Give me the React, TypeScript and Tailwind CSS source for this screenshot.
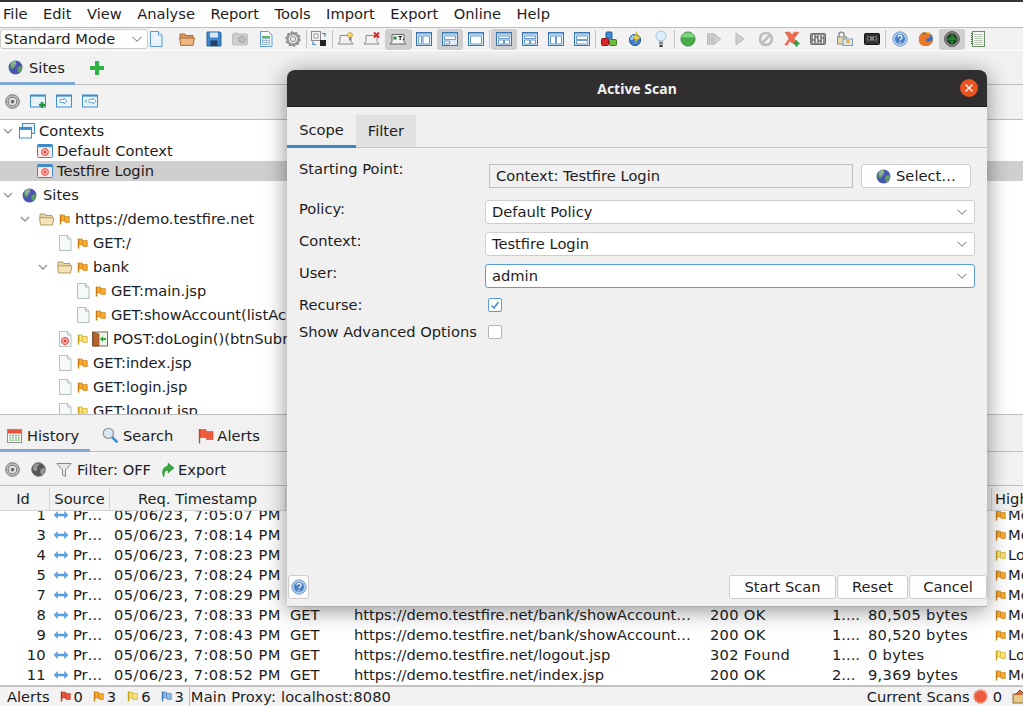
import React from "react";

const Svg = ({ children, className = "w-4 h-4" }: { children: React.ReactNode; className?: string }) => (
  <svg viewBox="0 0 16 16" className={"shrink-0 " + className}>{children}</svg>
);

const Flag = ({ c = "#f8a92c", d = "#c47a14" }: { c?: string; d?: string }) => (
  <svg viewBox="0 0 11 11" className="w-[11px] h-[11px] shrink-0">
    <path d="M1.500 .5v10" stroke={d} strokeWidth="1.400" />
    <path d="M2.200 1h3.300v1.500h4.800v6H6V7H2.200z" fill={c} stroke={d} strokeWidth=".6" />
    <path d="M5.500 2.500V7" stroke={d} strokeWidth=".6" />
  </svg>
);
const OF = () => <Flag />;
const YF = () => <Flag c="#f9e27a" d="#c4a11a" />;
const RF = () => <Flag c="#f0553e" d="#b8301c" />;
const BF = () => <Flag c="#8dbcea" d="#3f78b4" />;

const Page = ({ target = false }: { target?: boolean }) => (
  <Svg>
    <path d="M2.500 .5h8l3.500 3.500v11.500h-11.500z" fill="#f6f9fa" stroke="#b4bebe" />
    <path d="M10.500 .5v3.500h3.500" fill="#dfe6e6" stroke="#b4bebe" />
    {target && <><circle cx="8" cy="10" r="3.600" fill="#f5a7a0" stroke="#e0584c" /><circle cx="8" cy="10" r="1.300" fill="#e0443a" /></>}
  </Svg>
);
const Folder = () => (
  <Svg className="w-[16px] h-[16px]">
    <path d="M1 3h5l1 1.500h6v3H1z" fill="#e9d6a8" stroke="#b39a63" />
    <path d="M.6 6.800h14.200l-1.300 7.200H1.500z" fill="#f6e5bb" stroke="#b39a63" />
  </Svg>
);
const Globe = () => (
  <Svg className="w-[15px] h-[15px]">
    <circle cx="8" cy="8" r="7.400" fill="#4a55b0" />
    <path d="M3 3.500c2-2.500 5-3 6-2.500L8 4 6 5l1 2-2 3-3-2zM10 8l4-2 1 3-3 5-2-2z" fill="#5fa05a" />
    <circle cx="6" cy="4" r="3" fill="#fff" opacity=".28" />
  </Svg>
);
const Target = ({ dark = "#6f6f6f" }: { dark?: string }) => (
  <Svg className="w-[15px] h-[15px]">
    <circle cx="8" cy="8" r="7.300" fill="#bdbdbd" stroke={dark} />
    <circle cx="8" cy="8" r="4.600" fill="#e4e4e4" stroke={dark} />
    <circle cx="8" cy="8" r="2" fill={dark} />
  </Svg>
);
const CtxTarget = () => (
  <Svg>
    <rect x=".5" y="1.500" width="15" height="13" rx="1" fill="#fbe9e7" stroke="#3f8ccb" />
    <rect x=".5" y="1.500" width="15" height="2.600" fill="#3f8ccb" />
    <circle cx="8" cy="9" r="3.400" fill="#f6b0a8" stroke="#e0584c" />
    <circle cx="8" cy="9" r="1.200" fill="#e0443a" />
  </Svg>
);
const Win = ({ children }: { children?: React.ReactNode }) => (
  <Svg className="w-[16px] h-[16px]">
    <rect x=".5" y="2" width="15" height="12" fill="#eaf3fb" stroke="#3f8ccb" />
    <rect x=".5" y="2" width="15" height="1.600" fill="#3f8ccb" />
    {children}
  </Svg>
);
const Layout = ({ children }: { children?: React.ReactNode }) => (
  <svg viewBox="0 0 16 14" className="w-[16px] h-[14px] shrink-0">
    <rect x=".5" y=".5" width="15" height="13" fill="#dcebf8" stroke="#3a75ad" />
    <rect x="1" y="1" width="14" height="1.600" fill="#8fb7db" />
    {children}
  </svg>
);
const B = ({ d }: { d: string }) => <path d={d} fill="#fff" stroke="#4a87bf" strokeWidth=".8" />;

const Note = ({ x = false }: { x?: boolean }) => (
  <svg viewBox="0 0 18 14" className="w-[18px] h-[14px] shrink-0">
    <path d="M3 3.500h11v6l2 2.500H1l2-2.500z" fill="#f3f3f3" stroke="#8a8a8a" />
    {x ? <path d="M11 .5l5 5M16 .5l-5 5" stroke="#d8282a" strokeWidth="2" /> : <><circle cx="13" cy="3" r="2.600" fill="#f3d36a" stroke="#a98a2a" strokeWidth=".5" /><path d="M13 5.500v3" stroke="#444" strokeWidth="1.200" /></>}
  </svg>
);

const HelpIcon = () => (
  <Svg><circle cx="8" cy="8" r="7.200" fill="#a9c8ec" stroke="#7ea3d1" /><circle cx="8" cy="8" r="5" fill="#4a7fc4" /><path d="M6 6.300a2 2 0 1 1 3 1.700c-.7.400-1 .8-1 1.500M8 11v1.200" fill="none" stroke="#fff" strokeWidth="1.300" /></Svg>
);

const tools: (React.ReactNode | "sep")[] = [
  <Svg key="a"><path d="M2.500 .5h8l3.500 3.500v11.500h-11.500z" fill="#eaf3fb" stroke="#5a9ad6" /><path d="M10.500 .5v3.500h3.500" fill="#fff" stroke="#5a9ad6" /></Svg>,
  <Svg key="b"><path d="M1 3h5l1 1.500h7v4H1z" fill="#d99a5f" stroke="#a56c33" /><path d="M.6 7h14.800l-1.400 7.400H1.800z" fill="#edb680" stroke="#a56c33" /></Svg>,
  <Svg key="c"><path d="M1 1h13l1 1v13H1z" fill="#3f87cf" stroke="#2c6297" /><rect x="4" y="1.500" width="8" height="5" fill="#d9e8f6" /><rect x="4.500" y="9.500" width="7" height="5.500" fill="#24415f" /></Svg>,
  <svg key="d" viewBox="0 0 16 14" className="w-4 h-[14px] shrink-0"><rect x=".5" y="2" width="15" height="11" rx="1" fill="#cfcfcf" stroke="#bdbdbd" /><rect x="1.500" y=".5" width="4" height="2" fill="#c4c4c4" /><circle cx="10" cy="7.500" r="3.400" fill="#bcbcbc" stroke="#a8a8a8" /></svg>,
  <Svg key="e"><path d="M2.500 .5h8l3.500 3.500v11.500h-11.500z" fill="#f4f9fd" stroke="#5a9ad6" /><rect x="4" y="5" width="8" height="2" fill="#5fb55f" /><path d="M4.500 7.500h7v6h-7zM4.500 9.500h7M4.500 11.500h7M8 7.500v6" fill="none" stroke="#7fa8c8" strokeWidth=".7" /></Svg>,
  <Svg key="f"><circle cx="8" cy="8" r="5.600" fill="none" stroke="#9a9a9a" strokeWidth="2.600" /><circle cx="8" cy="8" r="7" fill="none" stroke="#8a8a8a" strokeWidth="1.600" strokeDasharray="2 2.400" /><circle cx="8" cy="8" r="2.600" fill="#eee" stroke="#8a8a8a" /></Svg>,
  "sep",
  <Svg key="g"><rect x=".5" y=".5" width="9" height="9" fill="#f3f3f3" stroke="#8c8c8c" /><rect x="3" y="3" width="4" height="4" fill="#fff" stroke="#999" /><rect x="9" y="9" width="6" height="6" fill="#222" /><path d="M11 2.500h3v3M5 13.500H2v-3" fill="none" stroke="#3f7fd0" strokeWidth="1.200" /></Svg>,
  "sep",
  <Note key="h" />,
  <Note key="i" x />,
  <svg key="j" viewBox="0 0 18 14" className="w-[18px] h-[14px] shrink-0"><path d="M3 2.500h12v7l2 2.500H1l2-2.500z" fill="#f3f3f3" stroke="#666" /><rect x="4.500" y="4.500" width="3" height="3" fill="#1a8f3a" /><path d="M9.500 4.500h3.500M11.200 4.500v3.500" stroke="#222" strokeWidth="1.200" /><circle cx="14.500" cy="7.500" r=".7" fill="#222" /></svg>,
  "sep",
  <Layout key="k"><B d="M2.500 4h3v8h-3zM7 4h6.500v8H7z" /></Layout>,
  <Layout key="l"><B d="M2.500 4h11v3.500h-11zM2.500 9h5v3h-5z" /></Layout>,
  <Layout key="m"><B d="M2.500 4h11v8h-11z" /></Layout>,
  "sep",
  <Layout key="n"><B d="M2.500 4h11v2.500h-11zM2.500 8h5v4h-5zM8.500 8h5v4h-5z" /></Layout>,
  <Layout key="o"><B d="M2.500 4h11v2.500h-11zM2.500 8h5v4h-5zM8.500 8h5v4h-5z" /></Layout>,
  <Layout key="p"><B d="M2.500 4h5v8h-5zM8.500 4h5v8h-5z" /></Layout>,
  <Layout key="q"><B d="M2.500 4h11v3.500h-11zM2.500 8.500h11v3.500h-11z" /></Layout>,
  "sep",
  <Svg key="r"><rect x="5" y="1" width="6" height="7" rx="1" fill="#3a8bdc" stroke="#24609c" /><rect x=".5" y="7.500" width="7" height="7" rx="1" fill="#d8262a" stroke="#8e1518" /><rect x="8.500" y="8.500" width="7" height="6" rx="1" fill="#6cbb3c" stroke="#3f7f1e" /></Svg>,
  <Svg key="s"><circle cx="8" cy="9" r="5.600" fill="#3d7fd6" stroke="#25578f" /><path d="M3 9a5 5 0 0 1 8-4l1.500-1v4h-4l1-1a3 3 0 0 0-4 2z" fill="#9ccbf2" /><path d="M10 .5L6 8h3l-1.500 5L13 5.500h-3.500z" fill="#f3d53d" stroke="#b89a12" strokeWidth=".5" /></Svg>,
  <svg key="t" viewBox="0 0 12 18" className="w-[12px] h-[18px] shrink-0"><circle cx="6" cy="6" r="5" fill="#dceefb" stroke="#9cc4e4" /><path d="M4 11.500h4v3H4z" fill="#8a8a8a" /><path d="M4.500 15h3v2h-3z" fill="#333" /></svg>,
  "sep",
  <Svg key="u"><circle cx="8" cy="8" r="7" fill="#49ab49" stroke="#2f8a33" /><path d="M1.500 6.500a6.500 5 0 0 1 13 0z" fill="#7fd47f" /></Svg>,
  <svg key="v" viewBox="0 0 14 14" className="w-[14px] h-[14px] shrink-0"><path d="M.5 1.500h2v11h-2zM4 1.500h2v11H4z" fill="#d0d0d0" stroke="#b8b8b8" /><path d="M7 1.500l6.500 5.500L7 12.500z" fill="#d0d0d0" stroke="#b8b8b8" /></svg>,
  <svg key="w" viewBox="0 0 14 14" className="w-[14px] h-[14px] shrink-0"><path d="M3 1l8 6-8 6z" fill="#d0d0d0" stroke="#b8b8b8" /></svg>,
  <Svg key="x"><circle cx="8" cy="8" r="6" fill="none" stroke="#bdbdbd" strokeWidth="2.600" /><path d="M4 12l8-8" stroke="#bdbdbd" strokeWidth="2.600" /></Svg>,
  <Svg key="y"><path d="M1 1l5 .2L8 4l2-2.800h5L10 7.500l3.500 4.500L8 12 6 10l-3 4H.8L5 7.500z" fill="#ef6a50" stroke="#d4412a" strokeWidth=".4" /><path d="M9.500 12.500h6M12.500 9.500v6" stroke="#1d9a3c" strokeWidth="2.200" /></Svg>,
  <svg key="z" viewBox="0 0 16 12" className="w-4 h-3 shrink-0"><rect x=".5" y=".5" width="15" height="11" rx="1" fill="#8f8f8f" stroke="#6a6a6a" /><path d="M3.500 2v8M6.500 2v8M9.500 2v8M12.500 2v8" stroke="#eee" strokeWidth="1" /><path d="M2.500 7h2M5.500 4h2M8.500 8h2M11.500 5h2" stroke="#333" strokeWidth="1.200" /></svg>,
  <Svg key="aa"><path d="M2 6V3.500a2.500 2.500 0 0 1 5 0V6" fill="none" stroke="#777" strokeWidth="1.200" /><rect x=".5" y="6" width="9" height="7" fill="#e8d9a8" stroke="#888" /><rect x="6" y="8" width="9.500" height="6.500" fill="#dbe8f4" stroke="#7a9cba" /><circle cx="11" cy="10.500" r="1.800" fill="#e9a93a" /></Svg>,
  <svg key="ab" viewBox="0 0 16 12" className="w-4 h-3 shrink-0"><rect x=".5" y=".5" width="15" height="11" rx="1" fill="#333" stroke="#111" /><rect x="3" y="3.500" width="10" height="4" fill="#888" /><circle cx="5" cy="5.500" r="1.200" fill="#222" /><circle cx="11" cy="5.500" r="1.200" fill="#222" /></svg>,
  "sep",
  <HelpIcon key="ac" />,
  <Svg key="ad"><circle cx="8" cy="8" r="7" fill="#3d70b8" /><path d="M2 13C-1 8 2 2 6 1c-1 1-1 2-1 3 3-2 6-1 7 0 1 2 0 3-2 3-2 1-3 3 0 4 2 0 4-1 5-3 0 4-3 7-7 7-3 0-5-1-6-2z" fill="#e8792a" /><path d="M6 1c3-1 6 0 8 3-1-1-3-1-4-1z" fill="#f4c23c" /></Svg>,
  <svg key="ae" viewBox="0 0 16 16" className="w-4 h-4 shrink-0"><circle cx="8" cy="8" r="7.400" fill="#8c8c8c" stroke="#555" /><circle cx="8" cy="8" r="5" fill="#0d5c1e" stroke="#222" /><path d="M8 3v10M3 8h10" stroke="#3fa84f" strokeWidth=".8" /><circle cx="9.500" cy="6.500" r="1" fill="#e33" /></svg>,
  <svg key="af" viewBox="0 0 14 16" className="w-[14px] h-4 shrink-0"><rect x="1.500" y=".5" width="12" height="15" fill="#f4f8f0" stroke="#6f8f6a" /><path d="M3.500 3.500h8M3.500 5.500h8M3.500 7.500h8M3.500 9.500h8M3.500 11.500h8M3.500 13.500h8" stroke="#9bb096" strokeWidth=".7" /><path d="M.5 2v12" stroke="#444" strokeDasharray="1 1" /></svg>,
];
const pressed = new Set(["j", "l", "n", "ae"]);
const shifted: Record<string, string> = { b: " ml-[5px]", c: " ml-[1px]", f: " ml-[1px]", g: " ml-[-1px]", k: " ml-[-1px]", n: " ml-[1px]", aa: " ml-[1px]", ab: " ml-[1px]", ac: " ml-[1px]" };

const Chevron = () => (
  <svg viewBox="0 0 10 6" className="w-[10px] h-[6px] shrink-0"><path d="M1 1l4 4 4-4" fill="none" stroke="#9a9a9a" strokeWidth="1.500" /></svg>
);
const CaretDown = () => (
  <svg viewBox="0 0 10 6" className="w-[10px] h-[6px] shrink-0"><path d="M.5.8l4.500 4.500L9.500.8" fill="none" stroke="#666" strokeWidth="1" /></svg>
);

const Row = ({ cls, children }: { cls: string; children: React.ReactNode }) => (
  <div className={"flex items-center whitespace-nowrap " + cls}>{children}</div>
);

const history = [
  ["1", "05/06/23, 7:05:07 PM", "", "", "", "", "", "M"],
  ["3", "05/06/23, 7:08:14 PM", "", "", "", "", "", "M"],
  ["4", "05/06/23, 7:08:23 PM", "", "", "", "", "", "L"],
  ["5", "05/06/23, 7:08:24 PM", "", "", "", "", "", "M"],
  ["7", "05/06/23, 7:08:29 PM", "", "", "", "", "", "M"],
  ["8", "05/06/23, 7:08:33 PM", "GET", "https://demo.testfire.net/bank/showAccount…", "200 OK", "1....", "80,505 bytes", "M"],
  ["9", "05/06/23, 7:08:43 PM", "GET", "https://demo.testfire.net/bank/showAccount…", "200 OK", "1....", "80,520 bytes", "M"],
  ["10", "05/06/23, 7:08:50 PM", "GET", "https://demo.testfire.net/logout.jsp", "302 Found", "1....", "0 bytes", "L"],
  ["11", "05/06/23, 7:08:52 PM", "GET", "https://demo.testfire.net/index.jsp", "200 OK", "2...", "9,369 bytes", "M"],
];
const cols = "grid grid-cols-[50px_60px_176px_64px_356px_124px_36px_126px_1fr]";

const Combo = ({ label, focus = false }: { label: string; focus?: boolean }) => (
  <div className={"flex-1 h-[24px] bg-white rounded-[3px] border flex items-center justify-between pl-[6px] pr-[7px] " + (focus ? "border-[#5b9bd5]" : "border-[#cdcdcd]")}>
    <span>{label}</span>
    <CaretDown />
  </div>
);
const Btn = ({ cls, children }: { cls: string; children: React.ReactNode }) => (
  <div className={"h-[24px] bg-white border border-[#cdcdcd] rounded-[3px] flex items-center justify-center gap-[5px] " + cls}>{children}</div>
);

export default function App() {
  return (
    <div className="relative w-[1023px] h-[706px] overflow-hidden bg-[#f0f0f0] flex flex-col text-[14.67px] leading-[20px] text-[#1c1c1c] font-['DejaVu_Sans',sans-serif]">
      <div className="h-[2px] bg-[#333333]" />
      <div className="h-[26px] bg-white flex items-center gap-[15.5px] pl-[3px] pb-[2px] border-b border-[#bcbcbc]">
        {["File", "Edit", "View", "Analyse", "Report", "Tools", "Import", "Export", "Online", "Help"].map((m) => <span key={m}>{m}</span>)}
      </div>
      <div className="h-[23px] bg-[#f2f2f2] flex items-center border-b border-white">
        <div className="w-[148px] h-[20px] bg-white border border-[#cdcdcd] rounded-[3px] flex items-center justify-between pl-[3px] pr-[5px] shrink-0">
          <span>Standard Mode</span>
          <CaretDown />
        </div>
        <div className="flex items-center ml-[-5px]">
          {tools.map((t, i) => {
            if (t === "sep") return <div key={i} className="w-px h-[18px] bg-[#c4c4c4]" />;
            const k = (t as React.ReactElement).key as string;
            return (
              <div key={i} className={"w-[26px] h-[21px] flex items-center justify-center rounded-[3px]" + (pressed.has(k) ? " bg-[#cfcfcf]" : "") + (shifted[k] || "")}>{t}</div>
            );
          })}
        </div>
      </div>

      <div className="h-[34px] flex bg-[#f1f1f1] border-b border-[#bdbdbd]">
        <div className="w-[75px] h-[34px] flex items-center gap-[6px] pl-[8px] pt-[2px] border-b-[3px] border-[#7faad6]">
          <Globe />
          <span>Sites</span>
        </div>
        <div className="flex items-center ml-[15px] pt-[1px]">
          <svg viewBox="0 0 14 14" className="w-[14px] h-[14px]"><path d="M5 0h4v5h5v4H9v5H5V9H0V5h5z" fill="#2fb344" /></svg>
        </div>
      </div>
      <div className="h-[35px] bg-[#f2f2f2] border-b border-[#bdbdbd] flex items-center pl-[5px] pb-[2px] gap-[10px]">
        <Target />
        <Win><path d="M9 12h6M12 9v6" stroke="#1d9a3c" strokeWidth="2.400" /></Win>
        <Win><path d="M4 6.500h4V5l3 3-3 3V9.500H4z" fill="#fff" stroke="#3f8ccb" strokeWidth=".7" /></Win>
        <Win><path d="M7 6.500h4V5l3 3-3 3V9.500H7zM3 7.500h2M3 9h2" fill="#fff" stroke="#3f8ccb" strokeWidth=".7" /></Win>
      </div>

      <div className="h-[295px] bg-white overflow-hidden border-b border-[#bdbdbd] pt-[1px]">
        <Row cls="h-[20px] pl-[2px]"><span className="w-[10px] ml-[1px]"><Chevron /></span><span className="ml-[6px]"><Svg><rect x="3.500" y=".5" width="12" height="10" fill="#eaf3fb" stroke="#3f8ccb" /><rect x=".5" y="4.500" width="12" height="10.500" fill="#fff" stroke="#3f8ccb" /><rect x=".5" y="4.500" width="12" height="2.400" fill="#3f8ccb" /></Svg></span><span className="ml-[4px]">Contexts</span></Row>
        <Row cls="h-[20px] pl-[37px] gap-[4px]"><CtxTarget /><span>Default Context</span></Row>
        <Row cls="h-[20px] pl-[37px] gap-[4px] bg-[#cfcfcf]"><CtxTarget /><span>Testfire Login</span></Row>
        <Row cls="h-[24px] pl-[2px] mt-[2px]"><span className="w-[10px] ml-[1px]"><Chevron /></span><span className="ml-[9px]"><Globe /></span><span className="ml-[6px]">Sites</span></Row>
        <Row cls="h-[24px] pl-[20px]"><Chevron /><span className="ml-[9px]"><Folder /></span><span className="ml-[4px]"><OF /></span><span className="ml-[5px]">https://demo.testfire.net</span></Row>
        <Row cls="h-[24px] pl-[57px]"><Page /><span className="ml-[4px]"><OF /></span><span className="ml-[5px]">GET:/</span></Row>
        <Row cls="h-[24px] pl-[38px]"><Chevron /><span className="ml-[9px]"><Folder /></span><span className="ml-[4px]"><OF /></span><span className="ml-[5px]">bank</span></Row>
        <Row cls="h-[24px] pl-[75px]"><Page /><span className="ml-[4px]"><OF /></span><span className="ml-[5px]">GET:main.jsp</span></Row>
        <Row cls="h-[24px] pl-[75px]"><Page /><span className="ml-[4px]"><OF /></span><span className="ml-[5px]">GET:showAccount(listAc</span></Row>
        <Row cls="h-[24px] pl-[57px]"><Page target /><span className="ml-[4px]"><YF /></span><span className="ml-[4px]"><Svg><rect x=".5" y="1" width="15" height="14" fill="#eef4e8" stroke="#7a6a50" /><path d="M1 1l6 2v12H1z" fill="#b9652a" stroke="#6f3a14" strokeWidth=".6" /><path d="M8 8l3-3v2h3v2h-3v2z" fill="#2fa53f" /></Svg></span><span className="ml-[5px]">POST:doLogin()(btnSubm</span></Row>
        <Row cls="h-[24px] pl-[57px]"><Page /><span className="ml-[4px]"><OF /></span><span className="ml-[5px]">GET:index.jsp</span></Row>
        <Row cls="h-[24px] pl-[57px]"><Page /><span className="ml-[4px]"><OF /></span><span className="ml-[5px]">GET:login.jsp</span></Row>
        <Row cls="h-[24px] pl-[57px]"><Page /><span className="ml-[4px]"><YF /></span><span className="ml-[5px]">GET:logout.jsp</span></Row>
      </div>

      <div className="h-[37px] flex items-stretch bg-[#f1f1f1] border-b border-[#bdbdbd]">
        <div className="w-[90px] flex items-center gap-[5px] pl-[7px] pt-[7px] border-b-[3px] border-[#7faad6] h-[37px]">
          <Svg className="w-[15px] h-[15px]"><rect x=".5" y="1.500" width="15" height="14" fill="#fff" stroke="#888" /><rect x="1" y="2" width="14" height="4" fill="#e8553e" /><path d="M2.500 8h11M2.500 10.500h11M2.500 13h11" stroke="#5fb55f" strokeWidth="1.400" strokeDasharray="2 1" /></Svg>
          <span>History</span>
        </div>
        <div className="flex items-center gap-[4px] ml-[12px] pt-[5px]">
          <Svg className="w-[17px] h-[17px]"><circle cx="6" cy="6" r="4.800" fill="#dbe9f7" stroke="#9a9a9a" strokeWidth="1.200" /><path d="M9.500 9.500l5 5" stroke="#3f8ccb" strokeWidth="2.400" /></Svg>
          <span>Search</span>
        </div>
        <div className="flex items-center gap-[3px] ml-[25px] pt-[5px]">
          <Svg className="w-[16px] h-[16px]"><path d="M1.500 1v14.500" stroke="#a05a2c" strokeWidth="1.400" /><path d="M2 1.500h6v2h7v8H8.500V9.500H2z" fill="#ee5b3e" stroke="#c63a22" strokeWidth=".5" /></Svg>
          <span>Alerts</span>
        </div>
      </div>
      <div className="h-[34px] bg-[#f2f2f2] border-b border-[#bdbdbd] flex items-center pl-[5px] pt-[2px]">
        <Target />
        <span className="ml-[11px]"><Svg className="w-[15px] h-[15px]"><circle cx="8" cy="8" r="7.300" fill="#555" stroke="#777" /><path d="M3 4c2-2 5-3 6-2L8 4 6 5l1 2-2 3-3-2zM10 8l4-2 1 3-3 5-2-2z" fill="#999" /></Svg></span>
        <span className="ml-[10px]"><Svg><path d="M.8 1.500h14.400L9.500 8v6.500l-3 -1.500V8z" fill="#e8e8e8" stroke="#8a8a8a" /></Svg></span>
        <span className="ml-[5px]">Filter: OFF</span>
        <span className="ml-[8px]"><Svg><path d="M5 15C2 10 4 5 9 4V1l6 5-6 5V8c-3 0-4 3-4 7z" fill="#35a83f" stroke="#1f7a2a" strokeWidth=".5" /></Svg></span>
        <span className="ml-[3px]">Export</span>
      </div>

      <div className={cols + " h-[25px] shrink-0 bg-[#f2f2f2] border-b border-[#d4d4d4] pt-[2px]"}>
        <div className="flex items-center justify-center border-r border-[#d4d4d4] pr-[3px]">Id</div>
        <div className="flex items-center justify-center border-r border-[#d4d4d4]">Source</div>
        <div className="flex items-center justify-center border-r border-[#d4d4d4]">Req. Timestamp</div>
        <div /><div /><div /><div />
        <div className="border-r border-[#d4d4d4]" />
        <div className="flex items-center pl-[3px] overflow-hidden">High</div>
      </div>
      <div className="flex-1 bg-white overflow-hidden">
        <div className="mt-[-6px]">
          {history.map((r) => (
            <div key={r[0]} className={cols + " h-[20px] items-center whitespace-nowrap"}>
              <div className="text-right pr-[4px] tracking-[0.3px]">{r[0]}</div>
              <div className="flex items-center pl-[4px] gap-[5px]">
                <svg viewBox="0 0 14 8" className="w-[14px] h-[8px] shrink-0"><path d="M0 4l3.500-3.500V3h7V.5L14 4l-3.500 3.500V5h-7v2.500z" fill="#5aa5e8" stroke="#3f80bd" strokeWidth=".4" /></svg>
                <span>Pr…</span>
              </div>
              <div className="pl-[4px] tracking-[0.45px]">{r[1]}</div>
              <div className="pl-[4px]">{r[2]}</div>
              <div className="pl-[4px]">{r[3]}</div>
              <div className="pl-[4px] tracking-[0.3px]">{r[4]}</div>
              <div className="pl-[2px]">{r[5]}</div>
              <div className="pl-[2px] tracking-[0.3px]">{r[6]}</div>
              <div className="flex items-center pl-[3px] gap-[2px]">{r[7] === "M" ? <OF /> : <YF />}<span>{r[7] === "M" ? "Me" : "Lo"}</span></div>
            </div>
          ))}
        </div>
      </div>

      <div className="h-[21px] shrink-0 bg-[#f2f2f2] border-t-2 border-[#c4c4c4] flex items-center justify-between pl-[7px] whitespace-nowrap">
        <div className="flex items-center">
          <span>Alerts</span>
          <span className="ml-[10px]"><RF /></span><span className="ml-[3px]">0</span>
          <span className="ml-[10px]"><OF /></span><span className="ml-[3px]">3</span>
          <span className="ml-[11px]"><YF /></span><span className="ml-[3px]">6</span>
          <span className="ml-[10px]"><BF /></span><span className="ml-[3px]">3</span>
          <span className="ml-[5px] border-l border-[#bbbbbb] pl-px tracking-[0.15px]">Main Proxy: localhost:8080</span>
        </div>
        <div className="flex items-center">
          <span>Current Scans</span>
          <span className="ml-[3px]"><svg viewBox="0 0 16 16" className="w-[15px] h-[15px]"><circle cx="8" cy="8" r="6.800" fill="#ee5a3e" stroke="#ef8a6a" strokeWidth="2" strokeDasharray="1.500 1" /></svg></span>
          <span className="ml-[5px]">0</span>
          <span className="ml-[10px] mr-[-5px]"><Svg className="w-[16px] h-[16px]"><rect x="1" y="5" width="14" height="9" fill="#e8c98a" stroke="#8a6a3a" /><path d="M3 6l5-5 5 5" fill="#d96a3a" stroke="#8a3a1a" /></Svg></span>
        </div>
      </div>

      {/* Active Scan dialog window */}
      <div className="absolute z-20 left-[287px] top-[70px] w-[700px] h-[537px] flex flex-col bg-[#f0f0f0] rounded-t-[8px] overflow-hidden border-b border-[#b0b0b0] shadow-[0_3px_22px_rgba(0,0,0,0.45)]">
        <div className="h-[37px] shrink-0 bg-[#302e2f] border-b border-[#1c1c1c] flex items-center justify-center relative">
          <span className="font-bold text-[#f2f2f2] text-[14px] pt-[1px] font-['Noto_Sans','DejaVu_Sans',sans-serif]">Active Scan</span>
          <div className="absolute right-[9px] top-[9px] w-[18px] h-[18px] rounded-full bg-[#e95420] flex items-center justify-center">
            <svg viewBox="0 0 10 10" className="w-[10px] h-[10px]"><path d="M1.500 1.500l7 7M8.500 1.500l-7 7" stroke="#fff" strokeWidth="1.300" /></svg>
          </div>
        </div>
        <div className="h-[41px] shrink-0 flex items-end border-b border-[#c4c4c4] pt-[8px]">
          <div className="w-[69px] h-[33px] flex items-center justify-center border-b-[3px] border-[#3d85c6] mb-[-1px]">Scope</div>
          <div className="w-[60px] h-[32px] flex items-center justify-center bg-[#e1e1e1]">Filter</div>
        </div>
        <div className="flex-1 flex flex-col pl-[12px] pr-[12px] pt-[16px]">
          <div className="flex h-[24px]">
            <span className="w-[190px] mt-[-5px]">Starting Point:</span>
            <div className="w-[364px] h-[24px] border border-[#bdbdbd] flex items-center pl-[6px]">Context: Testfire Login</div>
            <Btn cls="w-[110px] ml-[8px]"><Globe /><span>Select…</span></Btn>
          </div>
          <div className="flex mt-[12px]">
            <span className="w-[186px] mt-[-1px]">Policy:</span>
            <Combo label="Default Policy" />
          </div>
          <div className="flex mt-[8px]">
            <span className="w-[186px] mt-[-1px]">Context:</span>
            <Combo label="Testfire Login" />
          </div>
          <div className="flex mt-[8px]">
            <span className="w-[186px] mt-[-1px]">User:</span>
            <Combo label="admin" focus />
          </div>
          <div className="flex items-center mt-[7px] h-[20px]">
            <span className="w-[189px]">Recurse:</span>
            <div className="w-[14px] h-[14px] rounded-[2px] border border-[#5b9bd5] bg-white flex items-center justify-center">
              <svg viewBox="0 0 12 12" className="w-[12px] h-[12px]"><path d="M2.500 6.500l2.500 2.500 4.500-6" fill="none" stroke="#4a90d9" strokeWidth="1.600" /></svg>
            </div>
          </div>
          <div className="flex items-center mt-[7px] h-[20px]">
            <span className="w-[189px]">Show Advanced Options</span>
            <div className="w-[14px] h-[14px] rounded-[2px] border border-[#b4b4b4] bg-white" />
          </div>
        </div>
        <div className="h-[24px] mb-[7px] shrink-0 flex items-center">
          <Btn cls="w-[21px] ml-px"><HelpIcon /></Btn>
          <div className="flex-1" />
          <Btn cls="w-[107px]">Start Scan</Btn>
          <Btn cls="w-[71px] ml-[1px]">Reset</Btn>
          <Btn cls="w-[78px] ml-[1px]">Cancel</Btn>
        </div>
      </div>
    </div>
  );
}
